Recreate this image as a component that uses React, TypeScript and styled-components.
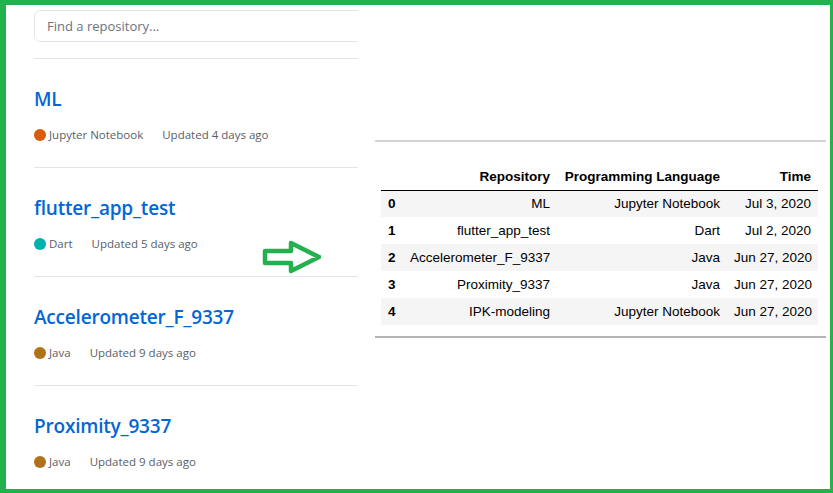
import React from 'react';
import styled, { createGlobalStyle } from 'styled-components';

const GlobalStyle = createGlobalStyle`
  html, body {
    margin: 0;
    padding: 0;
    background: #fff;
  }
  * { box-sizing: border-box; }
`;

const Frame = styled.div`
  position: relative;
  width: 833px;
  height: 493px;
  border-style: solid;
  border-color: #22b14c;
  border-width: 5px 3px 4px 6px;
  display: flex;
  overflow: hidden;
  background: #fff;
`;

const RepoColumn = styled.div`
  width: 352px;
  flex: none;
  overflow: hidden;
  padding: 5px 0 0 28px;
  font-family: 'Open Sans', 'Noto Sans', sans-serif;
`;

const SearchBox = styled.div`
  width: 420px;
  height: 32px;
  border: 1px solid #e1e4e8;
  border-radius: 6px;
  padding: 0 12px;
  display: flex;
  align-items: center;
  font-size: 13px;
  color: #6a737d;
  margin-bottom: 16px;
`;

const RepoItem = styled.div`
  width: 420px;
  border-top: 1px solid #e1e4e8;
  padding: 25px 0 23px;
`;

const RepoTitle = styled.div`
  font-size: 19px;
  font-weight: 600;
  line-height: 30px;
  color: #0366d6;
  letter-spacing: -0.2px;
`;

const Meta = styled.div`
  margin-top: 12px;
  display: flex;
  align-items: center;
  font-size: 11.5px;
  line-height: 18px;
  color: #586069;
`;

const Dot = styled.span<{ $color: string }>`
  width: 12px;
  height: 12px;
  border-radius: 50%;
  background: ${(p) => p.$color};
  margin-right: 3px;
  flex: none;
`;

const Lang = styled.span`
  margin-right: 19px;
`;

const TableColumn = styled.div`
  flex: 1;
  padding: 135px 4px 0 17px;
`;

const Panel = styled.div`
  border-top: 2px solid #d4d4d4;
  border-bottom: 2px solid #b4b4b4;
  padding: 21px 8px 11px 6px;
`;

const DataTable = styled.table`
  border-collapse: collapse;
  table-layout: fixed;
  width: 437px;
  font-family: 'Liberation Sans', Arial, sans-serif;
  font-size: 13.5px;
  color: #000;
`;

const Th = styled.th<{ $w: number }>`
  width: ${(p) => p.$w}px;
  height: 27px;
  padding: 0 7px;
  text-align: right;
  font-weight: bold;
  white-space: nowrap;
  border-bottom: 1px solid #000;
`;

const Row = styled.tr<{ $odd: boolean }>`
  background: ${(p) => (p.$odd ? '#f5f5f5' : '#fff')};
`;

const IndexCell = styled.th`
  height: 27px;
  padding: 0 7px;
  text-align: left;
  font-weight: bold;
`;

const Td = styled.td`
  height: 27px;
  padding: 0 7px;
  text-align: right;
  white-space: nowrap;
`;

const ArrowMark = styled.svg`
  position: absolute;
  left: 251px;
  top: 232px;
`;

const repos = [
  { name: 'ML', lang: 'Jupyter Notebook', color: '#da5b0b', updated: 'Updated 4 days ago' },
  { name: 'flutter_app_test', lang: 'Dart', color: '#00b4ab', updated: 'Updated 5 days ago' },
  { name: 'Accelerometer_F_9337', lang: 'Java', color: '#b07219', updated: 'Updated 9 days ago' },
  { name: 'Proximity_9337', lang: 'Java', color: '#b07219', updated: 'Updated 9 days ago' },
];

const rows = [
  ['ML', 'Jupyter Notebook', 'Jul 3, 2020'],
  ['flutter_app_test', 'Dart', 'Jul 2, 2020'],
  ['Accelerometer_F_9337', 'Java', 'Jun 27, 2020'],
  ['Proximity_9337', 'Java', 'Jun 27, 2020'],
  ['IPK-modeling', 'Jupyter Notebook', 'Jun 27, 2020'],
];

export default function App() {
  return (
    <>
      <GlobalStyle />
      <Frame>
        <RepoColumn>
          <SearchBox>Find a repository...</SearchBox>
          {repos.map((r) => (
            <RepoItem key={r.name}>
              <RepoTitle>{r.name}</RepoTitle>
              <Meta>
                <Dot $color={r.color} />
                <Lang>{r.lang}</Lang>
                <span>{r.updated}</span>
              </Meta>
            </RepoItem>
          ))}
        </RepoColumn>

        <TableColumn>
          <Panel>
            <DataTable>
              <thead>
                <tr>
                  <Th $w={22}></Th>
                  <Th $w={154}>Repository</Th>
                  <Th $w={170}>Programming Language</Th>
                  <Th $w={91}>Time</Th>
                </tr>
              </thead>
              <tbody>
                {rows.map((row, i) => (
                  <Row key={i} $odd={i % 2 === 0}>
                    <IndexCell>{i}</IndexCell>
                    {row.map((cell, j) => (
                      <Td key={j}>{cell}</Td>
                    ))}
                  </Row>
                ))}
              </tbody>
            </DataTable>
          </Panel>
        </TableColumn>

        {/* hand-drawn arrow pointing at the table */}
        <ArrowMark width="64" height="40" viewBox="0 0 64 40">
          <path
            d="M8 14 H34 V6 L62 20 L34 34 V26 H8 Z"
            fill="none"
            stroke="#22b14c"
            strokeWidth="4.5"
            strokeLinejoin="round"
          />
        </ArrowMark>
      </Frame>
    </>
  );
}
